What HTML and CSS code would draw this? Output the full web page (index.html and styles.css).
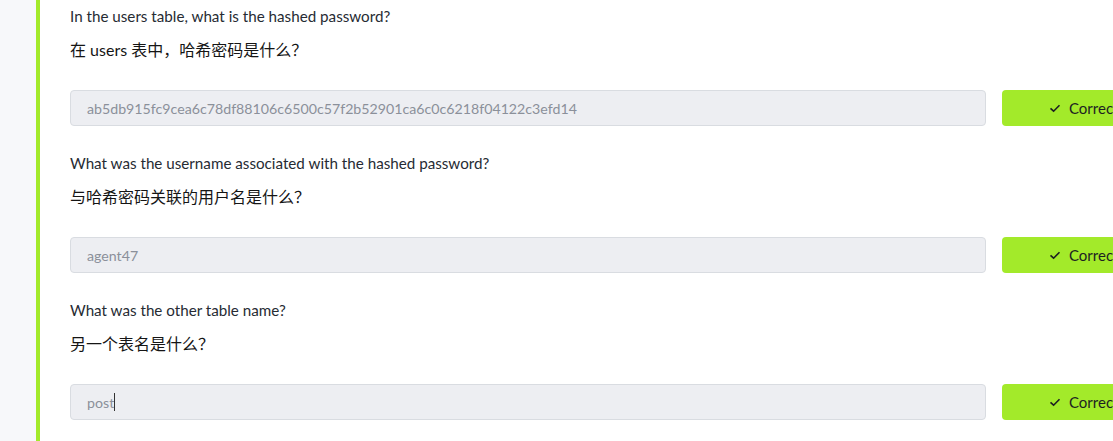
FILE: index.html
```html
<!DOCTYPE html>
<html lang="en">
<head>
<meta charset="utf-8">
<link rel="stylesheet" href="styles.css">
</head>
<body>
<div class="page">
  <div class="rail"></div>
  <div class="task">
    <div class="question">
      <p class="q-en">In the users table, what is the hashed password?</p>
      <p class="q-zh">在 users 表中，哈希密码是什么？</p>
      <div class="answer-row">
        <div class="answer">ab5db915fc9cea6c78df88106c6500c57f2b52901ca6c0c6218f04122c3efd14</div>
        <button class="btn-correct"><svg class="check" viewBox="0 0 12 12" width="12" height="12"><path d="M1.5 6.3 L4.6 9.2 L10.5 3.2" fill="none" stroke="#1d1f22" stroke-width="1.6"/></svg>Correct Answer</button>
      </div>
    </div>
    <div class="question">
      <p class="q-en">What was the username associated with the hashed password?</p>
      <p class="q-zh">与哈希密码关联的用户名是什么？</p>
      <div class="answer-row">
        <div class="answer">agent47</div>
        <button class="btn-correct"><svg class="check" viewBox="0 0 12 12" width="12" height="12"><path d="M1.5 6.3 L4.6 9.2 L10.5 3.2" fill="none" stroke="#1d1f22" stroke-width="1.6"/></svg>Correct Answer</button>
      </div>
    </div>
    <div class="question">
      <p class="q-en">What was the other table name?</p>
      <p class="q-zh">另一个表名是什么？</p>
      <div class="answer-row">
        <div class="answer">post<span class="caret"></span></div>
        <button class="btn-correct"><svg class="check" viewBox="0 0 12 12" width="12" height="12"><path d="M1.5 6.3 L4.6 9.2 L10.5 3.2" fill="none" stroke="#1d1f22" stroke-width="1.6"/></svg>Correct Answer</button>
      </div>
    </div>
  </div>
</div>
</body>
</html>
```

FILE: styles.css
```css
html, body {
  margin: 0;
  padding: 0;
  background: #ffffff;
  overflow: hidden;
}
.page {
  display: flex;
  height: 441px;
  font-family: "Lato", "Noto Sans CJK SC", sans-serif;
  color: #1f2328;
}
.rail {
  width: 36px;
  background: #f7f8fa;
  flex: none;
}
.task {
  border-left: 4px solid #a3ea2a;
  padding-left: 30px;
  flex: 1;
  min-width: 0;
}
.question {
  padding-top: 6px;
  height: 141px;
}
.q-en {
  margin: 0;
  font-size: 15.2px;
  line-height: 20px;
  color: #262b33;
}
.q-zh {
  margin: 14px 0 0;
  font-size: 16px;
  line-height: 20px;
  color: #151515;
}
.answer-row {
  margin-top: 30px;
  display: flex;
  gap: 16px;
}
.answer {
  flex: none;
  box-sizing: border-box;
  width: 916px;
  height: 36px;
  background: #edeef2;
  border: 1px solid #d9dce1;
  border-radius: 4px;
  padding-left: 16px;
  display: flex;
  align-items: center;
  font-size: 14.2px;
  color: #8b909a;
}
.caret {
  display: inline-block;
  width: 1px;
  height: 18px;
  background: #333;
}
.btn-correct {
  flex: none;
  width: 160px;
  height: 36px;
  border: none;
  border-radius: 4px;
  background: #a3ea2a;
  display: flex;
  align-items: center;
  padding: 0 0 0 47px;
  gap: 8px;
  font-family: "Lato", sans-serif;
  font-size: 15px;
  color: #1d1f22;
  white-space: nowrap;
}
.check { flex: none; }
```
